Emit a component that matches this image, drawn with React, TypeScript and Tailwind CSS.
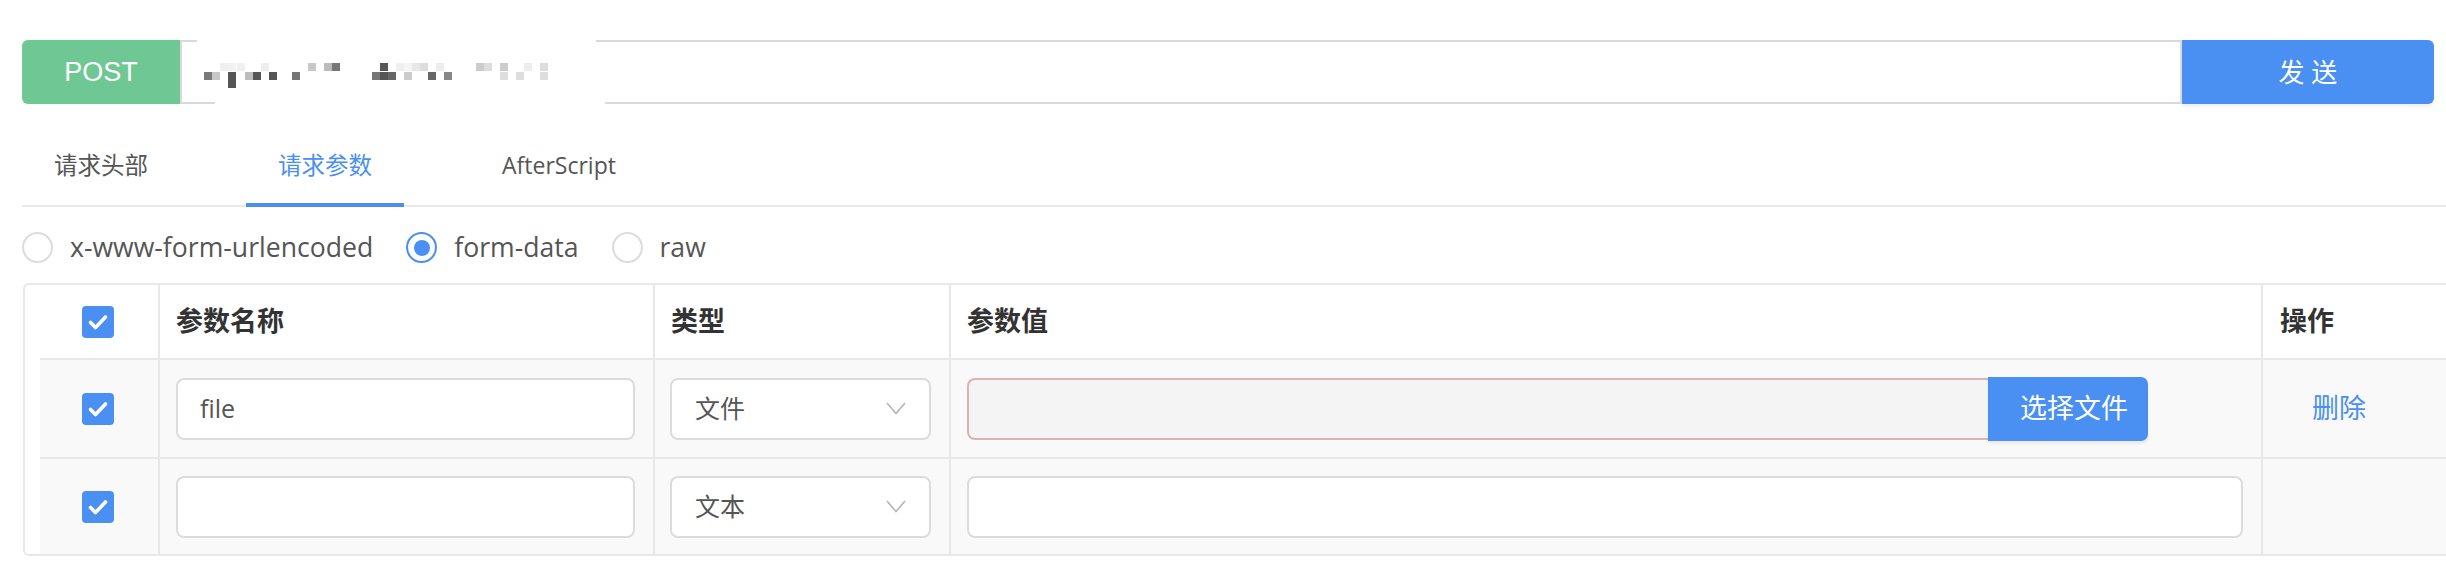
import React from 'react';

// pixelated (redacted) URL blocks, page coords
const blocks: [number, number, string][] = [
  [204, 72, '#7a7a7a'], [212, 72, '#c8c8c8'], [220, 63, '#efefef'],
  [228, 63, '#f2f2f2'], [228, 72, '#555555'], [228, 80, '#555555'],
  [237, 63, '#f0f0f0'], [245, 72, '#bdbdbd'], [253, 72, '#555555'],
  [261, 63, '#eeeeee'], [269, 72, '#555555'], [292, 72, '#777777'],
  [308, 63, '#c9c9c9'], [324, 63, '#bbbbbb'], [332, 63, '#777777'],
  [372, 72, '#777777'], [380, 63, '#555555'], [380, 72, '#555555'],
  [388, 72, '#666666'], [396, 63, '#f0f0f0'], [404, 63, '#f5f5f5'],
  [404, 72, '#cccccc'], [412, 63, '#e8e8e8'], [420, 63, '#dddddd'],
  [428, 72, '#666666'], [436, 63, '#eeeeee'], [444, 72, '#888888'],
  [476, 63, '#cccccc'], [484, 63, '#dddddd'], [500, 63, '#cccccc'],
  [500, 72, '#dddddd'], [516, 72, '#dddddd'], [524, 63, '#eeeeee'],
  [540, 63, '#dddddd'], [540, 72, '#dddddd'],
];

const Checkbox = () => (
  <div className="w-[32px] h-[32px] rounded-[4px] bg-[#4a90f2] flex items-center justify-center">
    <svg width="32" height="32" viewBox="0 0 32 32">
      <path d="M8.5 16.5 L13.5 21.5 L23.5 11" fill="none" stroke="white" strokeWidth="3.6" strokeLinecap="round" strokeLinejoin="round" />
    </svg>
  </div>
);

const Chevron = () => (
  <svg width="20" height="13" viewBox="0 0 20 13">
    <polyline points="1,1 10,11.5 19,1" fill="none" stroke="#b5b5b5" strokeWidth="1.6" />
  </svg>
);

const Radio = ({ checked, label }: { checked?: boolean; label: string }) => (
  <div className="flex items-center gap-[17px]">
    <div
      className={`w-[31px] h-[31px] rounded-full border-2 flex items-center justify-center ${
        checked ? 'border-[#4a90f2]' : 'border-[#dcdcdc]'
      }`}
    >
      {checked && <div className="w-[16px] h-[16px] rounded-full bg-[#4a90f2]" />}
    </div>
    <span>{label}</span>
  </div>
);

const Select = ({ value }: { value: string }) => (
  <div className="h-[62px] rounded-[8px] border-2 border-[#dcdcdc] bg-white flex items-center justify-between pl-[23px] pr-[23px] text-[25px] text-[#555]">
    <span>{value}</span>
    <Chevron />
  </div>
);

const TextInput = ({ value }: { value?: string }) => (
  <div className="h-[62px] rounded-[8px] border-2 border-[#dcdcdc] bg-white flex items-center pl-[22px] text-[25px] text-[#555]">
    {value}
  </div>
);

export default function App() {
  return (
    <div className="w-[2446px] h-[566px] overflow-hidden bg-white pt-[40px] font-['Open_Sans','Noto_Sans_CJK_SC',sans-serif]">
      {/* request bar */}
      <div className="ml-[22px] w-[2412px] h-[64px] flex">
        <div className="w-[158px] bg-[#6fc894] rounded-l-[6px] flex items-center justify-center text-white text-[27px] font-['Liberation_Sans',sans-serif]">
          POST
        </div>
        <div className="flex-1 relative border-2 border-[#dadada] bg-white">
          <div className="absolute left-[15px] top-[-2px] w-[399px] h-[3px] bg-white" />
          <div className="absolute left-[33px] bottom-[-2px] w-[390px] h-[3px] bg-white" />
          <svg className="absolute left-0 top-0" width="420" height="60">
            {blocks.map(([x, y, c], i) => (
              <rect key={i} x={x - 182} y={y - 42} width="8" height="8" fill={c} />
            ))}
          </svg>
        </div>
        <div className="w-[252px] bg-[#4a90f2] rounded-r-[6px] flex items-center justify-center text-white text-[26px] shadow-[0_3px_3px_rgba(0,0,0,0.06)]">
          发&nbsp;送
        </div>
      </div>

      {/* tabs */}
      <div className="mt-[24px] ml-[22px] flex gap-[66px] border-b-2 border-[#e9e9e9]">
        <div className="h-[79px] -mb-[2px] px-[32px] flex items-center text-[23.5px] text-[#555] border-b-4 border-transparent">
          请求头部
        </div>
        <div className="h-[79px] -mb-[2px] px-[32px] flex items-center text-[23.5px] text-[#4a90f2] border-b-4 border-[#4a90f2]">
          请求参数
        </div>
        <div className="h-[79px] -mb-[2px] px-[32px] flex items-center text-[23px] text-[#555] border-b-4 border-transparent">
          AfterScript
        </div>
      </div>

      {/* body type */}
      <div className="mt-[25px] ml-[22px] h-[31px] flex items-center gap-[33px] text-[26.6px] text-[#555]">
        <Radio label="x-www-form-urlencoded" />
        <Radio checked label="form-data" />
        <Radio label="raw" />
      </div>

      {/* params table */}
      <div className="mt-[20px] ml-[23px] w-[2480px] border-2 border-[#e8e8e8] rounded-[6px]">
        <div className="h-[73px] grid grid-cols-[135px_495px_296px_1312px_1fr] text-[27px] font-semibold text-[#333]">
          <div className="border-r-2 border-[#e8e8e8] flex items-center pl-[57px]">
            <Checkbox />
          </div>
          <div className="border-r-2 border-[#e8e8e8] flex items-center pl-[16px]">参数名称</div>
          <div className="border-r-2 border-[#e8e8e8] flex items-center pl-[16px]">类型</div>
          <div className="border-r-2 border-[#e8e8e8] flex items-center pl-[16px]">参数值</div>
          <div className="flex items-center pl-[17px]">操作</div>
        </div>

        <div className="ml-[15px] h-[99px] border-t-2 border-[#e8e8e8] bg-[#f9f9f9] grid grid-cols-[120px_495px_296px_1312px_1fr]">
          <div className="border-r-2 border-[#e8e8e8] flex items-center pl-[42px]">
            <Checkbox />
          </div>
          <div className="border-r-2 border-[#e8e8e8] flex flex-col justify-center pl-[16px] pr-[18px]">
            <TextInput value="file" />
          </div>
          <div className="border-r-2 border-[#e8e8e8] flex flex-col justify-center pl-[15px] pr-[18px]">
            <Select value="文件" />
          </div>
          <div className="border-r-2 border-[#e8e8e8] flex items-center pl-[16px]">
            <div className="w-[1021px] h-[62px] rounded-l-[8px] border-2 border-r-0 border-[#dcb2b2] bg-[#f4f4f4]" />
            <div className="w-[160px] h-[64px] bg-[#4a90f2] rounded-r-[7px] flex items-center pl-[32px] text-white text-[27px] shadow-[0_3px_3px_rgba(0,0,0,0.06)]">
              选择文件
            </div>
          </div>
          <div className="flex items-center pl-[49px] text-[27px] text-[#4a90f2]">删除</div>
        </div>

        <div className="ml-[15px] h-[97px] border-t-2 border-[#e8e8e8] bg-[#f9f9f9] grid grid-cols-[120px_495px_296px_1312px_1fr]">
          <div className="border-r-2 border-[#e8e8e8] flex items-center pl-[42px]">
            <Checkbox />
          </div>
          <div className="border-r-2 border-[#e8e8e8] flex flex-col justify-center pl-[16px] pr-[18px]">
            <TextInput />
          </div>
          <div className="border-r-2 border-[#e8e8e8] flex flex-col justify-center pl-[15px] pr-[18px]">
            <Select value="文本" />
          </div>
          <div className="border-r-2 border-[#e8e8e8] flex flex-col justify-center pl-[16px] pr-[18px]">
            <TextInput />
          </div>
          <div />
        </div>
      </div>
    </div>
  );
}
